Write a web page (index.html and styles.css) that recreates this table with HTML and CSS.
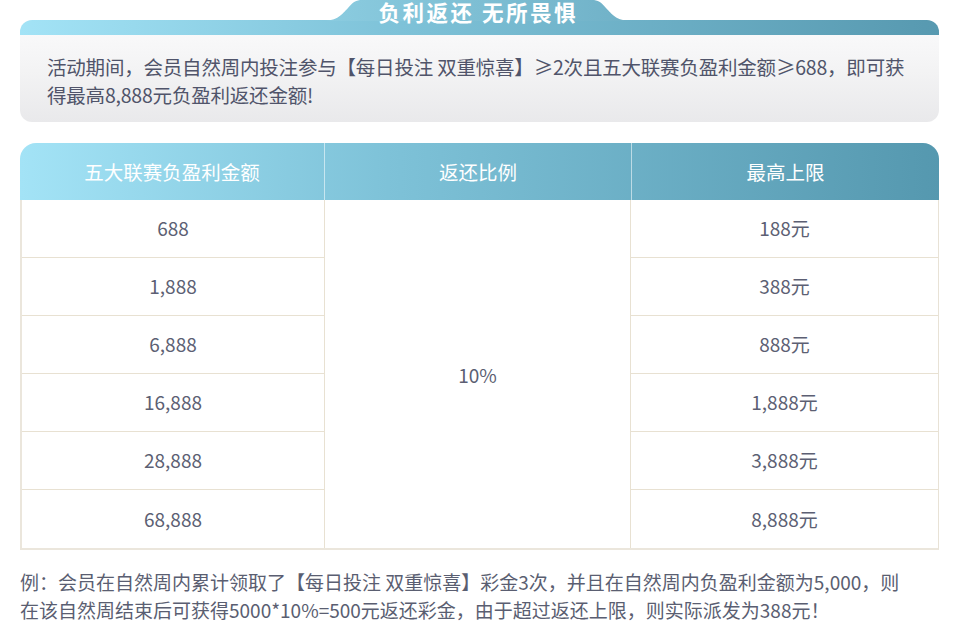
FILE: index.html
```html
<!DOCTYPE html>
<html lang="zh">
<head>
<meta charset="utf-8">
<link rel="stylesheet" href="styles.css">
</head>
<body>
<div class="page">
  <div class="tab">
    <svg class="tab-bg" width="310" height="21" viewBox="0 0 310 21" preserveAspectRatio="none">
      <defs>
        <linearGradient id="tg" x1="0" y1="0" x2="1" y2="0">
          <stop offset="0" stop-color="#8bcce0"/>
          <stop offset="1" stop-color="#70b1c7"/>
        </linearGradient>
      </defs>
      <path d="M0,21 C16,21 20,14 26,8 C31,2 34,0 40,0 L270,0 C276,0 279,2 284,8 C290,14 294,21 310,21 Z" fill="url(#tg)"/>
    </svg>
    <span class="tab-title">负利返还 无所畏惧</span>
  </div>
  <div class="card">
    <div class="card-strip"></div>
    <div class="card-body">活动期间，会员自然周内投注参与【每日投注 双重惊喜】≥2次且五大联赛负盈利金额≥688，即可获得最高8,888元负盈利返还金额!</div>
  </div>

  <div class="rtable">
    <div class="rhead">
      <div class="hcell c1">五大联赛负盈利金额</div>
      <div class="hcell c2">返还比例</div>
      <div class="hcell c3">最高上限</div>
    </div>
    <div class="rbody">
      <div class="cell a r1">688</div>
      <div class="cell mid">10%</div>
      <div class="cell c r1">188元</div>
      <div class="cell a r2">1,888</div>
      <div class="cell c r2">388元</div>
      <div class="cell a r3">6,888</div>
      <div class="cell c r3">888元</div>
      <div class="cell a r4">16,888</div>
      <div class="cell c r4">1,888元</div>
      <div class="cell a r5">28,888</div>
      <div class="cell c r5">3,888元</div>
      <div class="cell a r6 last">68,888</div>
      <div class="cell c r6 last">8,888元</div>
    </div>
  </div>

  <p class="note">例：会员在自然周内累计领取了【每日投注 双重惊喜】彩金3次，并且在自然周内负盈利金额为5,000，则在该自然周结束后可获得5000*10%=500元返还彩金，由于超过返还上限，则实际派发为388元！</p>
</div>
</body>
</html>
```

FILE: styles.css
```css
html, body {
  margin: 0;
  padding: 0;
  background: #ffffff;
}
body {
  font-family: "Noto Sans CJK SC", "Noto Sans", sans-serif;
  color: #55596b;
}
.page {
  width: 919px;
  margin-left: 20px;
}
.tab {
  position: relative;
  z-index: 1;
  width: 310px;
  height: 24px;
  margin-left: 302px;
  margin-bottom: -4px;
  display: flex;
  justify-content: center;
  align-items: flex-start;
}
.tab-bg {
  position: absolute;
  left: 0;
  top: 0;
  display: block;
}
.tab-title {
  position: relative;
  color: #ffffff;
  font-size: 21.5px;
  font-weight: 700;
  line-height: 22px;
  margin-top: 1px;
  letter-spacing: 2.5px;
  padding-left: 2.5px;
}
.card {
  border-radius: 12px;
  overflow: hidden;
  background: linear-gradient(180deg, #fbfbfc 0%, #f3f3f4 50%, #e9e9eb 100%);
}
.card-strip {
  height: 15px;
  background: linear-gradient(90deg, #a3e3f6 0%, #7fc3d9 40%, #5799b0 100%);
}
.card-body {
  padding: 18px 30px 13px 27px;
  font-size: 19.5px;
  line-height: 28px;
  color: #50546a;
  letter-spacing: -0.2px;
}
.rtable {
  margin-top: 21px;
}
.rhead {
  display: grid;
  grid-template-columns: 304px 307px 308px;
  height: 57px;
  border-radius: 16px 16px 0 0;
  background: linear-gradient(90deg, #a3e3f6 0%, #7ec2d8 40%, #5598af 100%);
}
.hcell {
  display: flex;
  align-items: center;
  justify-content: center;
  color: #ffffff;
  font-size: 19.5px;
}
.hcell.c2, .hcell.c3 {
  border-left: 1px solid rgba(255, 255, 255, 0.55);
}
.rbody {
  display: grid;
  grid-template-columns: 302px 307px 307px;
  grid-template-rows: repeat(6, 58px);
  border-left: 2px solid #ebe6dc;
  border-right: 1px solid #e8e2d6;
  border-bottom: 2px solid #ebe6dc;
  box-sizing: border-box;
  width: 919px;
}
.cell {
  display: flex;
  align-items: center;
  justify-content: center;
  font-size: 19px;
  color: #5c5f73;
  border-bottom: 1px solid #e8e1d2;
  padding-bottom: 2px;
  box-sizing: border-box;
}
.cell.last {
  border-bottom: none;
}
.cell.a { grid-column: 1; }
.cell.c { grid-column: 3; }
.cell.mid {
  grid-column: 2;
  grid-row: 1 / 7;
  border-left: 1px solid #e8e1d2;
  border-right: 1px solid #e8e1d2;
  border-bottom: none;
  padding-bottom: 0;
}
.r1 { grid-row: 1; }
.r2 { grid-row: 2; }
.r3 { grid-row: 3; }
.r4 { grid-row: 4; }
.r5 { grid-row: 5; }
.r6 { grid-row: 6; }
.note {
  margin: 18px 0 0 0;
  max-width: 895px;
  font-size: 19px;
  line-height: 28px;
  color: #5a5e71;
  letter-spacing: 0;
}
```
